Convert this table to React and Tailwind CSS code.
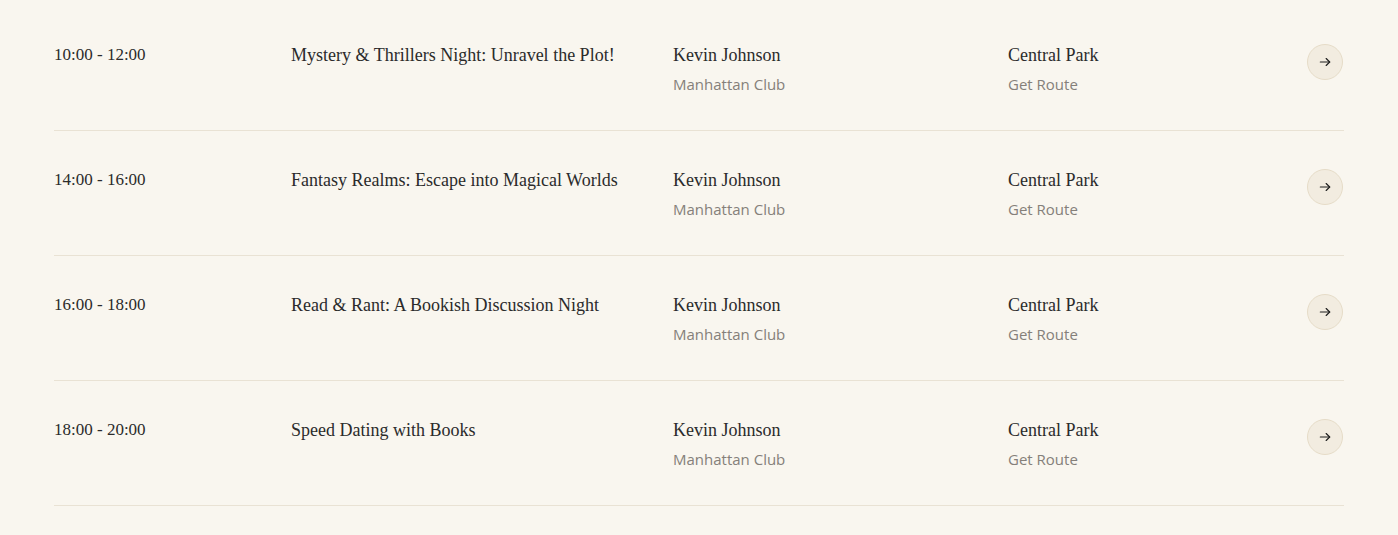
import React from 'react';

const EVENTS = [
  { time: '10:00 - 12:00', title: 'Mystery & Thrillers Night: Unravel the Plot!' },
  { time: '14:00 - 16:00', title: 'Fantasy Realms: Escape into Magical Worlds' },
  { time: '16:00 - 18:00', title: 'Read & Rant: A Bookish Discussion Night' },
  { time: '18:00 - 20:00', title: 'Speed Dating with Books' },
];

const Arrow = () => (
  <svg width="14" height="14" viewBox="0 0 24 24" fill="none" stroke="#1f1f1f" strokeWidth="2" strokeLinecap="round" strokeLinejoin="round">
    <path d="M4 12h16" />
    <path d="M14 6l6 6-6 6" />
  </svg>
);

const Row = ({ time, title }) => (
  <div className="grid grid-cols-[237px_382px_335px_1fr_auto] items-start border-b border-[#e9e2d4] pt-[35px] pb-[35px] font-['Liberation_Serif','DejaVu_Serif',serif] text-[#2b2b2b]">
    <div className="text-[17px] leading-[28px]">{time}</div>
    <div className="text-[18px] leading-[28px]">{title}</div>
    <div>
      <div className="text-[18px] leading-[28px]">Kevin Johnson</div>
      <div className="mt-1 text-[15px] leading-[22px] text-[#85807a] font-['Open_Sans','Liberation_Sans',sans-serif]">Manhattan Club</div>
    </div>
    <div>
      <div className="text-[18px] leading-[28px]">Central Park</div>
      <div className="mt-1 text-[15px] leading-[22px] text-[#85807a] font-['Open_Sans','Liberation_Sans',sans-serif]">Get Route</div>
    </div>
    <button className="mt-[3px] mr-px w-9 h-9 rounded-full bg-[#f2ece0] border border-[#e6dcc8] flex items-center justify-center">
      <Arrow />
    </button>
  </div>
);

export default function App() {
  return (
    <div className="w-full min-h-[535px] bg-[#f9f6ef] px-[54px] pt-[6px]">
      {EVENTS.map((e) => (
        <Row key={e.time} {...e} />
      ))}
    </div>
  );
}
